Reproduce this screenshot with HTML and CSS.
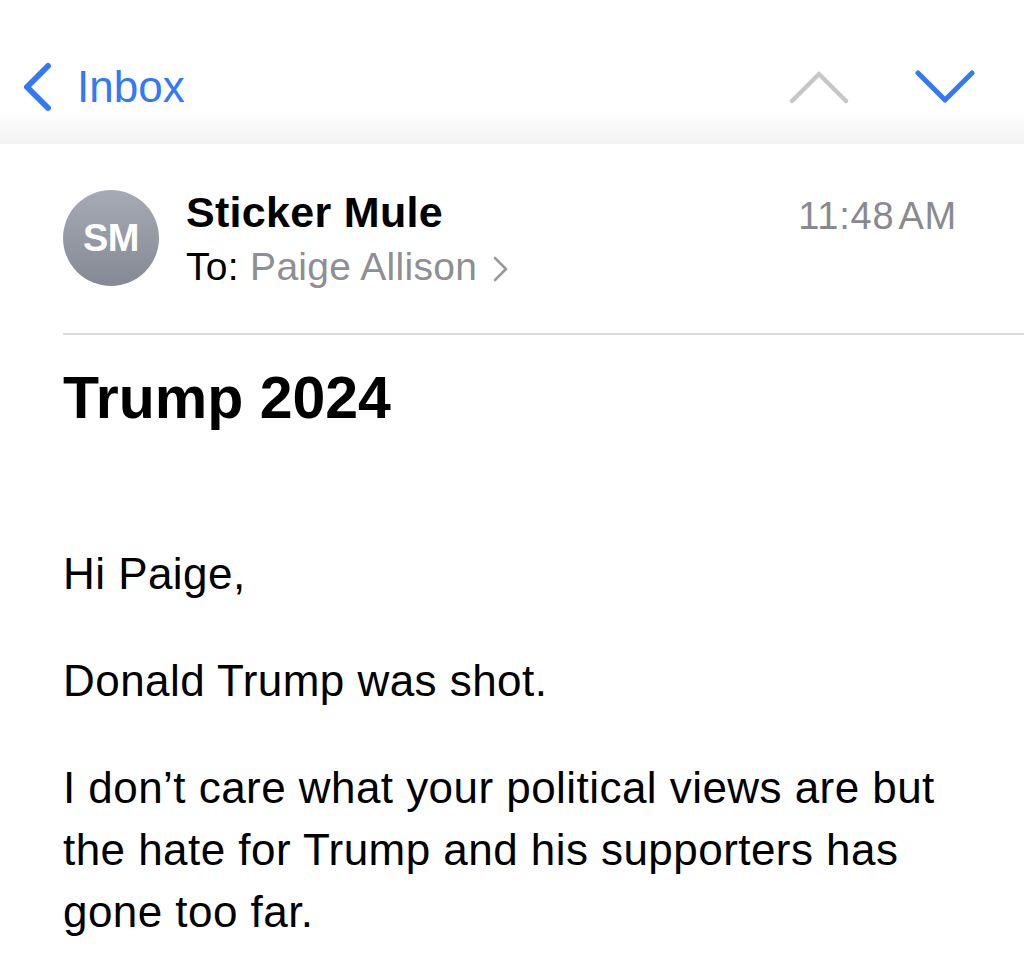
FILE: index.html
```html
<!DOCTYPE html>
<html lang="en">
<head>
<meta charset="utf-8">
<title>Trump 2024</title>
<link rel="stylesheet" href="styles.css">
</head>
<body>
<header class="topbar">
  <div class="nav">
    <a class="back">
      <svg class="back-icon" width="30" height="50" viewBox="0 0 30 50">
        <path d="M26 4 L5 25 L26 46" fill="none" stroke="#3478f6" stroke-width="6" stroke-linecap="round" stroke-linejoin="round"/>
      </svg>
      <span class="back-label">Inbox</span>
    </a>
    <div class="arrows">
      <svg class="arrow" width="60" height="36" viewBox="0 0 60 36">
        <path d="M3 32 L30 5 L57 32" fill="none" stroke="#c7c7c7" stroke-width="4.5" stroke-linecap="round" stroke-linejoin="round"/>
      </svg>
      <svg class="arrow" width="60" height="36" viewBox="0 0 60 36">
        <path d="M3 4 L30 31 L57 4" fill="none" stroke="#3478f6" stroke-width="5" stroke-linecap="round" stroke-linejoin="round"/>
      </svg>
    </div>
  </div>
</header>

<main class="mail">
  <section class="sender">
    <div class="avatar">SM</div>
    <div class="who">
      <div class="name">Sticker Mule</div>
      <div class="to">To: <span class="recipient">Paige Allison</span>
        <svg class="to-chev" width="18" height="30" viewBox="0 0 18 30"><path d="M4 4 L15 15 L4 26" fill="none" stroke="#9a9a9e" stroke-width="2.6" stroke-linecap="round" stroke-linejoin="round"/></svg>
      </div>
    </div>
    <div class="time">11:48&#8202;AM</div>
  </section>
  <div class="divider"></div>
  <h1 class="subject">Trump 2024</h1>
  <div class="body">
    <p>Hi Paige,</p>
    <p>Donald Trump was shot.</p>
    <p>I don’t care what your political views are but the hate for Trump and his supporters has gone too far.</p>
  </div>
</main>
</body>
</html>
```
FILE: styles.css
```css
html, body {
  margin: 0;
  padding: 0;
  background: #ffffff;
}
body {
  font-family: "Liberation Sans", Arial, sans-serif;
  color: #000;
  width: 1024px;
  height: 974px;
  overflow: hidden;
}
.topbar {
  height: 144px;
  background: linear-gradient(to bottom, #ffffff 0, #ffffff 112px, #f3f3f3 144px);
}
.nav {
  display: flex;
  justify-content: space-between;
  align-items: center;
  padding-top: 62px;
  height: 50px;
}
.back {
  display: flex;
  align-items: center;
  padding-left: 22px;
  color: #3478f6;
}
.back-icon {
  display: block;
}
.back-label {
  margin-left: 25px;
  font-size: 44px;
  line-height: 50px;
  letter-spacing: 0;
}
.arrows {
  display: flex;
  align-items: center;
  gap: 66px;
  padding-right: 49px;
}
.arrow {
  display: block;
}
.mail {
  padding-left: 63px;
}
.sender {
  display: flex;
  align-items: flex-start;
  margin-top: 43px;
}
.avatar {
  width: 96px;
  height: 96px;
  margin-top: 3px;
  border-radius: 50%;
  background: linear-gradient(to bottom, #a6aab5, #858993);
  color: #fff;
  font-size: 38px;
  font-weight: 600;
  display: flex;
  align-items: center;
  justify-content: center;
  letter-spacing: -0.5px;
  flex: none;
}
.who {
  margin-left: 27px;
  flex: 1;
}
.name {
  font-size: 43px;
  line-height: 50px;
  font-weight: 700;
  letter-spacing: 0.3px;
}
.to {
  margin-top: 6px;
  font-size: 39px;
  line-height: 47px;
  display: flex;
  align-items: center;
  white-space: pre;
  letter-spacing: 0.3px;
}
.recipient {
  color: #8e8e93;
}
.to-chev {
  margin-left: 14px;
  margin-top: 4px;
}
.time {
  margin-top: 4px;
  margin-right: 67px;
  font-size: 38px;
  line-height: 50px;
  letter-spacing: 0.8px;
  color: #8a8a8e;
}
.divider {
  margin-top: 43px;
  height: 2px;
  background: #dcdcdc;
}
.subject {
  margin: 28px 0 0 0;
  padding-left: 0;
  font-size: 59px;
  line-height: 70px;
  font-weight: 700;
  letter-spacing: 0;
}
.body {
  margin-top: 110px;
  max-width: 910px;
  font-size: 44px;
  line-height: 62px;
  letter-spacing: 0.45px;
}
.body p {
  margin: 0 0 45px 0;
}
```
